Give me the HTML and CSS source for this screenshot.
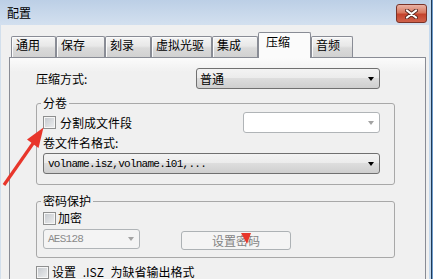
FILE: index.html
```html
<!DOCTYPE html>
<html lang="zh-CN">
<head>
<meta charset="utf-8">
<link rel="stylesheet" href="styles.css">
</head>
<body>
<div class="window">
  <div class="main">
    <div class="titlebar">
      <span class="title">配置</span>
      <div class="close">
        <svg width="13" height="10" viewBox="0 0 13 10">
          <path d="M2 1.5 L11 8.5 M11 1.5 L2 8.5" stroke="#5a2a22" stroke-width="4" stroke-linecap="round"/>
          <path d="M2 1.5 L11 8.5 M11 1.5 L2 8.5" stroke="#fff" stroke-width="2.2" stroke-linecap="round"/>
        </svg>
      </div>
    </div>
    <div class="client">
      <div class="tabs">
        <div class="tab w1">通用</div>
        <div class="tab w2">保存</div>
        <div class="tab w3">刻录</div>
        <div class="tab w4">虚拟光驱</div>
        <div class="tab w5">集成</div>
        <div class="tab active w6">压缩</div>
        <div class="tab w7">音频</div>
      </div>
      <div class="panel">
        <div class="content">
          <div class="row r-method">
            <span>压缩方式:</span>
            <div class="combo w-method"><span>普通</span><i class="arrow"></i></div>
          </div>
          <div class="group g-split">
            <div class="gtitle">分卷</div>
            <div class="row r-split">
              <div class="chk"><span class="box"></span><span>分割成文件段</span></div>
              <div class="combo disabled w-size"><i class="arrow"></i></div>
            </div>
            <div class="lbl">卷文件名格式:</div>
            <div class="combo w-name"><span class="mono">volname.isz,volname.i01,...</span><i class="arrow"></i></div>
          </div>
          <div class="group g-pass">
            <div class="gtitle">密码保护</div>
            <div class="row r-enc">
              <div class="chk"><span class="box"></span><span>加密</span></div>
            </div>
            <div class="row r-aes">
              <div class="combo disabled gray w-aes"><span class="mono">AES128</span><i class="arrow"></i></div>
              <div class="btn">设置密码</div>
            </div>
          </div>
          <div class="row r-default">
            <div class="chk"><span class="box"></span><span class="spaced">设置 .ISZ 为缺省输出格式</span></div>
          </div>
        </div>
      </div>
    </div>
  </div>
  <div class="rframe"></div>
</div>
<svg class="overlay" width="433" height="279" viewBox="0 0 433 279">
  <line x1="4" y1="185" x2="34" y2="142" stroke="#e8362b" stroke-width="3.2"/>
  <polygon points="43.5,127.5 27,139.5 38.5,148" fill="#e8362b"/>
  <polygon points="241,233 251,233 247,244" fill="#e8362b"/>
</svg>
</body>
</html>
```

FILE: styles.css
```css
* {
  box-sizing: border-box;
  margin: 0;
  padding: 0;
}

html, body {
  width: 433px;
  height: 279px;
  overflow: hidden;
}

body {
  position: relative;
  background: #f0f0f0;
  color: #000;
  font-family: "Noto Sans CJK SC", "Noto Sans", sans-serif;
  font-size: 12px;
  line-height: 14px;
}

.window {
  display: flex;
  height: 279px;
}

.main {
  width: 429px;
  display: flex;
  flex-direction: column;
}

.rframe {
  width: 4px;
  background: linear-gradient(to right, #c4d9ee 0, #c4d9ee 2px, #1f3a58 2px, #1f3a58 3px, #6f9ccb 3px);
}

.titlebar {
  height: 25px;
  flex: none;
  display: flex;
  align-items: flex-start;
  padding-left: 7px;
  background: linear-gradient(#bccfe6, #d3e0ef);
}

.title {
  margin-top: 6px;
}

.close {
  margin-left: auto;
  margin-right: 2px;
  margin-top: 4px;
  width: 31px;
  height: 19px;
  border: 1px solid #7a3328;
  border-radius: 3px;
  background: linear-gradient(#eab3a6, #d8785f 45%, #c4432d 55%, #d0624b);
  display: flex;
  align-items: center;
  justify-content: center;
}

.client {
  flex: 1;
  display: flex;
  flex-direction: column;
  padding-right: 3px;
  border-left: 1px solid #d2dfec;
  padding-left: 8px;
}

.tabs {
  position: relative;
  z-index: 1;
  margin-top: 7px;
  height: 25px;
  flex: none;
  display: flex;
  align-items: flex-end;
  padding-left: 2px;
}

.tab {
  height: 21px;
  border: 1px solid #898c95;
  border-bottom: 0;
  border-radius: 2px 2px 0 0;
  padding: 1px 0 0 4px;
  white-space: nowrap;
  background: linear-gradient(#f4f4f4, #e8e8e8 45%, #dadada 55%, #d1d1d1);
  box-shadow: inset 1px 1px 0 #fbfbfb;
}

.tab.active {
  height: 26px;
  margin-bottom: -1px;
  padding: 2px 0 0 7px;
  background: #fbfbfb;
  box-shadow: none;
}

.w1 { width: 45px; }
.w2 { width: 49px; }
.w3 { width: 46px; }
.w4 { width: 61px; }
.w5 { width: 46px; }
.w6 { width: 53px; }
.w7 { width: 42px; }

.panel {
  flex: 1;
  border: 1px solid #898c95;
  background: linear-gradient(#fbfbfb, #f0f0f0 14px);
  padding: 10px 0 0 26px;
}

.content {
  width: 359px;
}

.row {
  display: flex;
  align-items: center;
}

.r-method {
  height: 21px;
}

.combo {
  height: 21px;
  display: flex;
  align-items: center;
  padding-left: 3px;
  border: 1px solid #707070;
  border-radius: 3px;
  background: linear-gradient(#f3f3f3, #ebebeb 50%, #dddddd 50%, #cfcfcf);
}

.combo .arrow {
  margin-left: auto;
  margin-right: 5px;
  width: 0;
  height: 0;
  border-left: 3.5px solid transparent;
  border-right: 3.5px solid transparent;
  border-top: 4px solid #000;
}

.combo.disabled {
  border-color: #b0b4b7;
  background: #fff;
}

.combo.disabled .arrow {
  border-top-color: #a3a3a3;
}

.combo.gray {
  background: #f4f4f4;
  color: #8a8a8a;
}

.mono {
  font-family: "Liberation Mono", monospace;
  font-size: 11px;
  letter-spacing: -0.75px;
  padding-left: 1px;
}

.w-method {
  width: 184px;
  margin-left: auto;
  margin-right: 15px;
}

.group {
  border: 1px solid #a8a8a8;
  border-radius: 3px;
  padding: 0 14px 10px 6px;
}

.gtitle {
  display: table;
  margin: -8px 0 0 -2px;
  padding: 0 2px;
  background: #f0f0f0;
}

.g-split {
  margin-top: 14px;
}

.r-split {
  margin-top: 2px;
  height: 21px;
}

.chk {
  display: flex;
  align-items: center;
  gap: 4px;
}

.box {
  flex: none;
  width: 13px;
  height: 13px;
  border: 1px solid #8e8f8f;
  background: linear-gradient(135deg, #c3c7cc, #eeeff0);
  box-shadow: inset 0 0 0 1px #f6f6f6;
}

.w-size {
  width: 137px;
  margin-left: auto;
}

.lbl {
  margin-top: 3px;
}

.w-name {
  margin-top: 3px;
}

.g-pass {
  margin-top: 16px;
  padding-bottom: 7px;
}

.r-enc {
  margin-top: 3px;
}

.r-enc .chk {
  gap: 2px;
}

.r-aes {
  margin-top: 4px;
  align-items: flex-start;
}

.w-aes {
  width: 97px;
  height: 20px;
}

.btn {
  width: 110px;
  height: 19px;
  margin-left: 41px;
  margin-top: 2px;
  border: 1px solid #adb2b5;
  border-radius: 3px;
  background: #f4f4f4;
  color: #838383;
  display: flex;
  align-items: center;
  justify-content: center;
}

.r-default {
  margin-top: 7px;
}

.r-default .chk {
  gap: 3px;
}

.spaced {
  word-spacing: 4px;
}

.overlay {
  position: absolute;
  top: 0;
  left: 0;
  pointer-events: none;
}
```
